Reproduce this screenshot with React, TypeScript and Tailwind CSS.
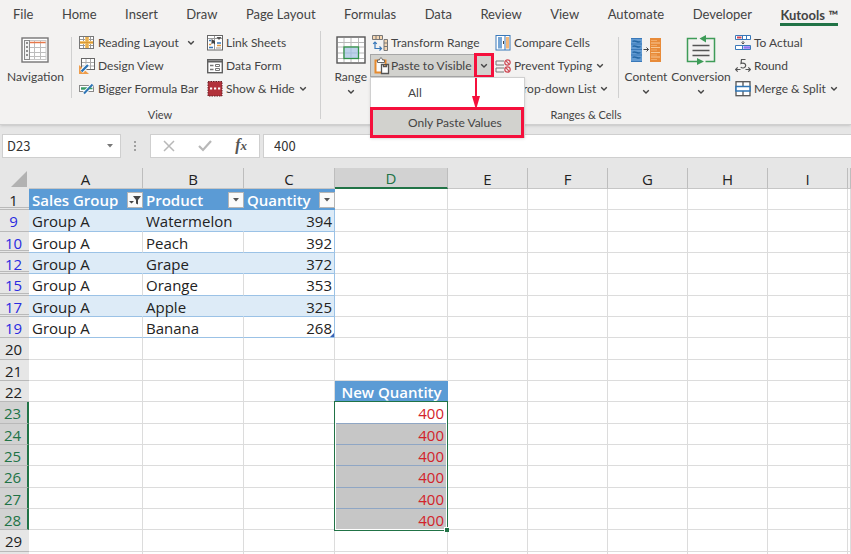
import type { ReactNode } from "react";
import clsx from "clsx";

const TABS = [
  "File",
  "Home",
  "Insert",
  "Draw",
  "Page Layout",
  "Formulas",
  "Data",
  "Review",
  "View",
  "Automate",
  "Developer",
  "Kutools ™",
];

const COLUMNS = ["A", "B", "C", "D", "E", "F", "G", "H", "I", ""];

type SheetRow = { row: number; cells?: [string, string, string]; extra?: string };

const ROWS: SheetRow[] = [
  { row: 9, cells: ["Group A", "Watermelon", "394"] },
  { row: 10, cells: ["Group A", "Peach", "392"] },
  { row: 12, cells: ["Group A", "Grape", "372"] },
  { row: 15, cells: ["Group A", "Orange", "353"] },
  { row: 17, cells: ["Group A", "Apple", "325"] },
  { row: 19, cells: ["Group A", "Banana", "268"] },
  { row: 20 },
  { row: 21 },
  { row: 22, extra: "New Quantity" },
  { row: 23, extra: "400" },
  { row: 24, extra: "400" },
  { row: 25, extra: "400" },
  { row: 26, extra: "400" },
  { row: 27, extra: "400" },
  { row: 28, extra: "400" },
  { row: 29 },
];

function Chevron() {
  return (
    <svg width="8" height="6" viewBox="0 0 8 6" fill="none" stroke="#444" strokeWidth="1.4" className="shrink-0">
      <path d="M1.2 1.2 4 4l2.800-2.800" />
    </svg>
  );
}

function NavigationIcon() {
  return (
    <svg width="28" height="26" viewBox="0 0 28 26" fill="none">
      <rect x="1" y="1" width="26" height="24" fill="#fff" stroke="#767676" strokeWidth="1.4" />
      <path d="M7.500 10.500H25M7.500 15.500H25M7.500 19.500H25M13.500 3v20M19.500 3v20" stroke="#bdbdbd" />
      <rect x="3.500" y="3.500" width="5" height="19" fill="#f2f2f2" stroke="#8a8a8a" />
      <path d="M6 5v16" stroke="#777" strokeWidth="1.600" strokeDasharray="2 2" />
      <path d="M9 5.500h16" stroke="#e8784a" strokeWidth="1.500" />
      <path d="M9 3.500h16M9 22.500h16M25 3v20" stroke="#c8c8c8" />
    </svg>
  );
}

function ReadingLayoutIcon() {
  return (
    <svg width="16" height="16" viewBox="0 0 16 16" fill="none">
      <rect x="0.500" y="1.500" width="14" height="12" fill="#fff" stroke="#777" />
      <path d="M4.500 2v11M11.500 2v11M1 4.500h13M1 10.500h13" stroke="#999" />
      <path d="M6 2h4v11H6zM1 6h13v3H1z" fill="#f4c36f" />
      <path d="M8 2v11M1 7.500h13" stroke="#d99a35" />
    </svg>
  );
}

function DesignViewIcon() {
  return (
    <svg width="16" height="16" viewBox="0 0 16 16" fill="none">
      <rect x="2.500" y="0.500" width="13" height="11" fill="#fff" stroke="#666" />
      <path d="M7 1v10M11.500 1v10M3 4.500h12M3 8h12" stroke="#aaa" />
      <path d="M0 7v9h10z" fill="#ee9d4c" />
      <path d="M2 11.500v2.500h3z" fill="#fff" />
      <path d="m2.500 13.500 7-7" stroke="#fff" strokeWidth="4" />
      <path d="m2.500 13.500 6.500-6.500" stroke="#2f75b5" strokeWidth="2.400" />
    </svg>
  );
}

function FormulaBarIcon() {
  return (
    <svg width="16" height="16" viewBox="0 0 16 16" fill="none">
      <rect x="0.500" y="4.500" width="14" height="6" fill="#fff" stroke="#888" />
      <path d="M2 7.500h7" stroke="#3b9b67" strokeWidth="2.500" />
      <path d="m5 12.500 8.500-9" stroke="#fff" strokeWidth="4" />
      <path d="m5 12.500 8.500-9" stroke="#2f75b5" strokeWidth="2" />
      <path d="M10 7.500h3.500" stroke="#3b9b67" strokeWidth="1.500" />
    </svg>
  );
}

function LinkSheetsIcon() {
  return (
    <svg width="16" height="16" viewBox="0 0 16 16" fill="none">
      <rect x="0.500" y="0.500" width="15" height="14.500" fill="#fff" stroke="#666" />
      <path d="M7.500 1v14M1 3.500h14M9 13h5" stroke="#999" />
      <path d="M2 5.500h2M10 8h4M2 12.500h4" stroke="#3978b9" strokeWidth="1.500" />
      <path d="M10 10.500h4M2 9.500h2" stroke="#e39a42" strokeWidth="1.300" />
      <path d="M4.500 4v5.500L6 8l2 1.500V6z" fill="#444" />
      <path d="M9.500 2h5L12 5z" fill="#555" />
    </svg>
  );
}

function DataFormIcon() {
  return (
    <svg width="16" height="16" viewBox="0 0 16 16" fill="none">
      <rect x="0.700" y="1.700" width="14.600" height="13" fill="#fff" stroke="#606060" strokeWidth="1.400" />
      <path d="M1 3.500h14" stroke="#606060" strokeWidth="2" />
      <path d="M3 7.500h3.500M3 11.500h3.500" stroke="#777" strokeWidth="1.300" />
      <path d="M8.500 6.500h4v2h-4zM8.500 10.500h4v2h-4z" stroke="#777" />
    </svg>
  );
}

function ShowHideIcon() {
  return (
    <svg width="16" height="16" viewBox="0 0 16 16" fill="none">
      <rect x="1" y="0.500" width="14" height="14.500" fill="#b2323b" stroke="#681f25" strokeDasharray="1.500 1" />
      <path d="M3 7.500h2.200M7 7.500h2.200M11 7.500h2.200" stroke="#fff" strokeWidth="1.800" />
    </svg>
  );
}

function RangeIcon() {
  return (
    <svg width="30" height="28" viewBox="0 0 30 28" fill="none">
      <rect x="1" y="1" width="28" height="26" fill="#fff" stroke="#555" strokeWidth="1.400" />
      <path d="M8 2v24M15 2v24M22.500 2v24M2 6.500h26M2 11h26M2 17h26M2 22.500h26" stroke="#b8b8b8" />
      <rect x="8" y="11" width="14.500" height="11.500" fill="#bdd2ea" stroke="#319348" strokeWidth="1.300" />
      <path d="M15 12v10M9 17h13" stroke="#a5bfd9" />
    </svg>
  );
}

function TransformIcon() {
  return (
    <svg width="16" height="16" viewBox="0 0 16 16" fill="none">
      <path d="M0.500 0.500h10v4h-10zM4 0.500v4M7.500 0.500v4" fill="#f5d7b3" stroke="#777" />
      <path d="M12 4.500h3.500v11H12zM12 8h3.500M12 11.500h3.500" fill="#f5d7b3" stroke="#777" />
      <path d="M3 7v6.500h6M1.200 8.800 3 7l1.800 1.800M7.500 11.500l2 2-2 2" stroke="#3978b9" strokeWidth="1.200" />
    </svg>
  );
}

function PasteIcon() {
  return (
    <svg width="16" height="18" viewBox="0 0 16 18" fill="none">
      <path d="M1.500 3.500h10v12h-10z" fill="#fbfbfb" stroke="#e68a2e" strokeWidth="2" />
      <path d="M3.500 5.500V3h2c0-2.700 3-2.700 3 0h2v2.500z" fill="#fff" stroke="#666" />
      <path d="M7.500 7.500h2v2h3v-2h2v9h-7z" fill="#fff" stroke="#555" strokeWidth="1.300" />
      <path d="M9.500 7.500h3" stroke="#555" />
    </svg>
  );
}

function CompareIcon() {
  return (
    <svg width="16" height="16" viewBox="0 0 16 16" fill="none">
      <rect x="1" y="0.500" width="14" height="14.500" fill="#fff" stroke="#3978b9" />
      <path d="M3 2h4v11.500H3z" fill="#75a5d5" />
      <path d="M11 2h3v11.500h-3z" fill="#f2b679" />
      <path d="M10 1v14" stroke="#3978b9" />
      <path d="M8.500 6v3" stroke="#444" />
    </svg>
  );
}

function PreventIcon() {
  return (
    <svg width="16" height="16" viewBox="0 0 16 16" fill="none">
      <path d="M9 3H1v4h8M9 10H1v4h8" stroke="#777" />
      <g stroke="#cf4a55" strokeWidth="1.200">
        <circle cx="12.500" cy="4.500" r="2.700" />
        <path d="m10.700 2.700 3.600 3.600" />
        <circle cx="12.500" cy="11.500" r="2.700" />
        <path d="m10.700 9.700 3.600 3.600" />
      </g>
    </svg>
  );
}

function DropListIcon() {
  return (
    <svg width="16" height="16" viewBox="0 0 16 16" fill="none">
      <path d="M1 2.500h14v4H1zM1 6.500h14v8H1z" fill="#fff" stroke="#777" />
    </svg>
  );
}

function ContentIcon() {
  return (
    <svg width="30" height="26" viewBox="0 0 30 26" fill="none">
      <path d="M0 1h11v24H0z" fill="#639bd2" />
      <path d="M1.500 4.500c3-2 5 2 8 0M1.500 9.500c3-2 5 2 8 0M1.500 15.500c3-2 5 2 8 0M1.500 20.500c3-2 5 2 8 0" stroke="#2467a5" strokeWidth="1.500" />
      <path d="M0 1.500h11M0 7h11M0 12.500h11M0 18h11M0 24.500h11" stroke="#3978b9" />
      <path d="M19 1h11v24H19z" fill="#e88b39" />
      <path d="M20 6h9M20 10.500h9M20 15.500h9M20 20h9" stroke="#f7c895" strokeWidth="1.200" />
      <path d="M20 3.500h6M20 8.500h6M20 13h6M20 18h6M20 22.500h6" stroke="#f2ac6a" />
      <path d="M12.500 12.500h5M15.500 10.500l2 2-2 2" stroke="#444" />
    </svg>
  );
}

function ConversionIcon() {
  return (
    <svg width="30" height="30" viewBox="0 0 30 30" fill="none">
      <path d="M11 3.500H1.500v23H11M20 3.500h8.500v23H19.500" stroke="#3e9c58" strokeWidth="1.500" />
      <path d="M20 0v7.500L13.500 3.500zM11 23v7l7-3.500z" fill="#3e9c58" />
      <path d="M6.500 10.500h17M6.500 15.500h17M6.500 20.500h17" stroke="#555" strokeWidth="1.400" />
    </svg>
  );
}

function ActualIcon() {
  return (
    <svg width="16" height="16" viewBox="0 0 16 16" fill="none">
      <path d="M0.500 0.500h15v4H0.500zM0.500 10.500h15v4H0.500z" fill="#fff" stroke="#3978b9" />
      <path d="M2 2.500h4.500" stroke="#cf4a55" strokeWidth="2" />
      <path d="M7.500 0.500v4M11.500 0.500v4M7.500 10.500v4" stroke="#3978b9" />
      <path d="M8.500 12.500h6.500" stroke="#8d72f0" strokeWidth="2.500" />
      <path d="M8 6v3M6.500 7.500 8 9l1.500-1.500" stroke="#555" />
    </svg>
  );
}

function RoundIcon() {
  return (
    <svg width="16" height="16" viewBox="0 0 16 16" fill="none" stroke="#555">
      <path d="M10.500 1.500H6.500L6 5.500c2-.8 4.700-.3 4.700 2s-3 3.200-5 1.800" strokeWidth="1.200" />
      <path d="M5.500 11.500h-5M2.700 9.300.5 11.500l2.200 2.200M10.500 11.500h5M13.300 9.300l2.200 2.200-2.200 2.200" strokeWidth="1.200" />
    </svg>
  );
}

function MergeIcon() {
  return (
    <svg width="16" height="16" viewBox="0 0 16 16" fill="none">
      <rect x="1" y="0.700" width="14" height="14" fill="#fff" stroke="#555" strokeWidth="1.300" />
      <path d="M8 1v4M8 10v5" stroke="#555" strokeWidth="1.300" />
      <path d="M1 5.500h14v4.500H1z" fill="#fff" stroke="#2f75b5" strokeWidth="1.500" />
    </svg>
  );
}

function RibbonButton({ icon, label, menu, wide }: { icon: ReactNode; label: string; menu?: boolean; wide?: boolean }) {
  return (
    <button className="flex h-[23px] items-center whitespace-nowrap">
      <span className="mr-[3px] flex w-4 shrink-0 justify-center">{icon}</span>
      {label}
      {menu && (
        <span className={wide ? "ml-2" : "ml-1"}>
          <Chevron />
        </span>
      )}
    </button>
  );
}

function BigButton({ icon, label, menu }: { icon: ReactNode; label: string; menu?: boolean }) {
  return (
    <button className="flex flex-col items-center whitespace-nowrap">
      <span className="flex h-[38px] items-center">{icon}</span>
      <span className="leading-4">{label}</span>
      {menu && (
        <span className="mt-1">
          <Chevron />
        </span>
      )}
    </button>
  );
}

function Divider() {
  return <div className="mt-[6px] h-[61px] w-px shrink-0 bg-[#d0d0d0]" />;
}

function PasteToVisible() {
  return (
    <div className="relative z-10 flex h-[23px] items-center border border-[#a6a6a6] bg-[#d2d2ce]">
      <button className="flex flex-1 items-center whitespace-nowrap pl-[3px]">
        <span className="mr-px">
          <PasteIcon />
        </span>
        Paste to Visible
      </button>
      <button aria-label="Paste to Visible options" className="-my-1 -mr-px flex h-[25px] w-5 shrink-0 items-center justify-center border-[3px] border-[#f5103c]">
        <Chevron />
      </button>
      <div role="menu" className="absolute -left-px top-[22px] w-[155px] border border-[#d0d0d0] bg-white shadow-sm">
        <button role="menuitem" className="block h-[29px] w-full pl-[37px] text-left">
          All
        </button>
        <button
          role="menuitem"
          className="-mx-px -mb-px block h-[31px] w-[154px] whitespace-nowrap border-[3px] border-[#f5103c] bg-[#d2d2ce] pl-[35px] text-left"
        >
          Only Paste Values
        </button>
      </div>
      <svg width="8" height="30" viewBox="0 0 8 30" className="absolute right-[13px] top-[23px]">
        <path d="M3 0h2v18h3L4.500 30h-1L0 18h3z" fill="#f5103c" />
      </svg>
    </div>
  );
}

function Ribbon() {
  return (
    <header className="border-b border-[#cfcfcf] bg-[#f3f2f1] font-['Lato',sans-serif] text-[12px] text-[#444] shadow-sm">
      <nav className="flex h-[31px] justify-between px-[13px] text-[13px]">
        {TABS.map((tab) => (
          <button
            key={tab}
            className={clsx(
              "mb-[5px] whitespace-nowrap pt-[2px] leading-5",
              tab === "Kutools ™" && "border-b-[3px] border-[#217346] pt-[5px] font-bold",
            )}
          >
            {tab}
          </button>
        ))}
      </nav>
      <div className="flex">
        <section className="flex w-[320px] shrink-0 flex-col">
          <div className="flex h-[75px]">
            <div className="flex w-[71px] shrink-0 justify-center">
              <BigButton icon={<NavigationIcon />} label="Navigation" />
            </div>
            <Divider />
            <div className="w-[127px] shrink-0 pl-[7px]">
              <RibbonButton icon={<ReadingLayoutIcon />} label="Reading Layout" menu wide />
              <RibbonButton icon={<DesignViewIcon />} label="Design View" />
              <RibbonButton icon={<FormulaBarIcon />} label="Bigger Formula Bar" />
            </div>
            <div className="pl-2">
              <RibbonButton icon={<LinkSheetsIcon />} label="Link Sheets" />
              <RibbonButton icon={<DataFormIcon />} label="Data Form" />
              <RibbonButton icon={<ShowHideIcon />} label="Show & Hide" menu />
            </div>
          </div>
          <h2 className="h-[18px] text-center text-[11px] leading-[18px]">View</h2>
        </section>
        <div className="h-[88px] w-px shrink-0 bg-[#d0d0d0]" />
        <section className="flex flex-1 flex-col">
          <div className="flex h-[75px]">
            <div className="flex w-[49px] shrink-0 justify-end pr-[3px]">
              <BigButton icon={<RangeIcon />} label="Range" menu />
            </div>
            <div className="w-[124px] shrink-0">
              <div className="pl-[2px]">
                <RibbonButton icon={<TransformIcon />} label="Transform Range" />
              </div>
              <PasteToVisible />
            </div>
            <div className="w-[124px] shrink-0 pl-px">
              <RibbonButton icon={<CompareIcon />} label="Compare Cells" />
              <RibbonButton icon={<PreventIcon />} label="Prevent Typing" menu />
              <RibbonButton icon={<DropListIcon />} label="Drop-down List" menu />
            </div>
            <Divider />
            <div className="flex w-[54px] shrink-0 justify-center">
              <BigButton icon={<ContentIcon />} label="Content" menu />
            </div>
            <div className="flex w-[56px] shrink-0 justify-center">
              <BigButton icon={<ConversionIcon />} label="Conversion" menu />
            </div>
            <div className="pl-[6px]">
              <RibbonButton icon={<ActualIcon />} label="To Actual" />
              <RibbonButton icon={<RoundIcon />} label="Round" />
              <RibbonButton icon={<MergeIcon />} label="Merge & Split" menu />
            </div>
          </div>
          <h2 className="h-[18px] text-center text-[11px] leading-[18px]">Ranges &amp; Cells</h2>
        </section>
      </div>
    </header>
  );
}

function FormulaBar() {
  return (
    <div className="flex h-[43px] items-center pb-[2px] pl-[2px] font-['Noto_Sans_CJK_SC',sans-serif] text-[13px] text-[#333]">
      <div className="flex h-6 w-[119px] items-center border border-[#cfcfcf] bg-white pr-[7px]">
        <input aria-label="Name Box" defaultValue="D23" className="w-full min-w-0 bg-transparent pl-1 outline-none" />
        <svg width="6" height="4" viewBox="0 0 6 4" className="shrink-0">
          <path d="M0 0h6L3 3.500z" fill="#777" />
        </svg>
      </div>
      <svg width="29" height="12" viewBox="0 0 29 12" fill="#a0a0a0">
        <path d="M13 1h2v2h-2zM13 5h2v2h-2zM13 9h2v2h-2z" />
      </svg>
      <div className="flex h-6 w-[110px] items-center justify-between border border-[#cfcfcf] bg-white px-3">
        <button aria-label="Cancel">
          <svg width="12" height="12" viewBox="0 0 12 12" fill="none" stroke="#b8b8b8" strokeWidth="1.500">
            <path d="m1 1 10 10M11 1 1 11" />
          </svg>
        </button>
        <button aria-label="Enter">
          <svg width="14" height="12" viewBox="0 0 14 12" fill="none" stroke="#b8b8b8" strokeWidth="2.200">
            <path d="m1 6 4 4 8-9" />
          </svg>
        </button>
        <button aria-label="Insert Function" className="font-['Liberation_Serif',serif] text-[16px] font-bold italic leading-5 text-[#555]">
          f<span className="text-[13px]">x</span>
        </button>
      </div>
      <input
        aria-label="Formula Bar"
        defaultValue="400"
        className="ml-[3px] h-6 min-w-0 flex-1 border border-r-0 border-[#cfcfcf] bg-white pl-[10px] outline-none"
      />
    </div>
  );
}

function FilterHeader({ label, filtered }: { label: string; filtered?: boolean }) {
  return (
    <th scope="col" className="border-b border-[#5b9bd5] bg-[#5b9bd5] p-0 pl-[3px] text-left font-semibold text-white">
      <div className="flex items-center justify-between pt-[2px]">
        <span className="whitespace-nowrap">{label}</span>
        <button aria-label={`Filter ${label}`} className="flex size-4 shrink-0 items-center justify-center border border-[#b5b5b5] bg-[#fafafa]">
          {filtered ? (
            <svg width="12" height="9" viewBox="0 0 12 9" fill="#444">
              <path d="M4 0h8L9 4v4.500L7 7.500V4zM0 5h5L2.500 7.500z" />
            </svg>
          ) : (
            <svg width="6" height="4" viewBox="0 0 6 4" fill="#555">
              <path d="M0 0h6L3 3.500z" />
            </svg>
          )}
        </button>
      </div>
    </th>
  );
}

function RowNumber({ row }: { row: number }) {
  const filtered = row > 1 && row < 20;
  const selected = row >= 23 && row <= 28;
  return (
    <th
      scope="row"
      className={clsx(
        "border-b border-b-[#b9b9b9] p-0 pr-[2px] pt-px text-center font-normal",
        // a second line marks the hidden rows below
        row < 18 && row !== 9 && "shadow-[inset_0_-1px_0_#e6e6e6,inset_0_-2px_0_#b9b9b9]",
        filtered && "text-[#2a2ae0]",
        selected ? "border-r-2 border-r-[#217346] bg-[#d2d2d2] pr-0 text-[#217346]" : "bg-[#e6e6e6]",
      )}
    >
      {row}
    </th>
  );
}

function ExtraCell({ row, value }: { row: number; value?: string }) {
  if (row === 22) {
    return <td className="whitespace-nowrap border-b border-[#5b9bd5] bg-[#5b9bd5] p-0 pt-px text-center font-semibold text-white">{value}</td>;
  }
  if (!value) {
    return <td className="border-b border-r border-[#dcdcdc] p-0" />;
  }
  return (
    <td
      className={clsx(
        "relative border-b border-r border-b-[#8fa6c4] border-r-[#dcdcdc] p-0 pr-[3px] pt-px text-right text-[#d2232a]",
        row > 23 && "bg-[#c6c6c6]",
      )}
    >
      {value}
      {/* selection outline for D23:D28, drawn from its first cell */}
      {row === 23 && (
        <div className="pointer-events-none absolute -left-px -top-px z-10 h-[130px] w-[114px] border border-[#217346]">
          <div className="h-full border border-white" />
          <div className="absolute -bottom-[2px] -right-[2px] size-[5px] border-l border-t border-white bg-[#217346]" />
        </div>
      )}
    </td>
  );
}

function BodyRow({ item }: { item: SheetRow }) {
  const banded = [9, 12, 17].includes(item.row);
  return (
    <tr className="h-[21px] nth-[3n+2]:h-[22px]">
      <RowNumber row={item.row} />
      {item.cells
        ? item.cells.map((cell, i) => (
            <td
              key={i}
              className={clsx(
                "relative whitespace-nowrap border-b border-r border-b-[#9bc2e6] p-0 pt-px",
                banded ? "bg-[#ddebf7]" : "bg-white",
                i === 2 ? "border-r-[#9bc2e6] pr-[2px] text-right" : "pl-[3px]",
                i < 2 && (banded ? "border-r-[#ddebf7]" : "border-r-[#dcdcdc]"),
              )}
            >
              {cell}
              {item.row === 19 && i === 2 && (
                <svg width="4" height="4" viewBox="0 0 4 4" className="absolute bottom-0 right-0">
                  <path d="M4 0v4H0z" fill="#3a62b5" />
                </svg>
              )}
            </td>
          ))
        : [0, 1, 2].map((i) => <td key={i} className="border-b border-r border-[#dcdcdc] p-0" />)}
      <ExtraCell row={item.row} value={item.extra} />
      {[4, 5, 6, 7, 8, 9].map((i) => (
        <td key={i} className="border-b border-r border-[#dcdcdc] p-0" />
      ))}
    </tr>
  );
}

function Sheet() {
  return (
    <table className="w-full table-fixed border-separate border-spacing-0 bg-white font-['Open_Sans',sans-serif] text-[15px] leading-[18px] text-[#222]">
      <colgroup>
        <col className="w-[29px]" />
        <col className="w-[114px]" />
        <col className="w-[101px]" />
        <col className="w-[91px]" />
        <col className="w-[113px]" />
        <col className="w-[80px]" />
        <col className="w-[80px]" />
        <col className="w-[80px]" />
        <col className="w-[80px]" />
        <col className="w-[80px]" />
        <col />
      </colgroup>
      <thead>
        <tr className="h-[21px]">
          <th aria-label="Select all" className="bg-[#e6e6e6] p-0">
            <svg width="16" height="16" viewBox="0 0 16 16" className="ml-auto mr-[2px]">
              <path d="M16 0v16H0z" fill="#b2b2b2" />
            </svg>
          </th>
          {COLUMNS.map((name, i) => (
            <th
              key={i}
              scope="col"
              className={clsx(
                "border-r border-r-[#bdbdbd] p-0 pt-px font-normal",
                name === "D" ? "border-b-2 border-b-[#217346] bg-[#d2d2d2] text-[#217346]" : "border-b border-b-[#c6c6c6] bg-[#e6e6e6]",
              )}
            >
              {name}
            </th>
          ))}
        </tr>
      </thead>
      <tbody>
        <tr className="h-[21px]">
          <RowNumber row={1} />
          <FilterHeader label="Sales Group" filtered />
          <FilterHeader label="Product" />
          <FilterHeader label="Quantity" />
          {[3, 4, 5, 6, 7, 8, 9].map((i) => (
            <td key={i} className="border-b border-r border-[#dcdcdc] p-0" />
          ))}
        </tr>
        {ROWS.map((item) => (
          <BodyRow key={item.row} item={item} />
        ))}
        <tr className="h-[21px]">
          <td className="bg-[#e6e6e6] p-0" />
          {COLUMNS.map((name) => (
            <td key={name} className="border-r border-[#dcdcdc] p-0" />
          ))}
        </tr>
      </tbody>
    </table>
  );
}

export default function App() {
  return (
    <div className="h-screen overflow-hidden bg-[#e6e6e6]">
      <Ribbon />
      <FormulaBar />
      <Sheet />
    </div>
  );
}
